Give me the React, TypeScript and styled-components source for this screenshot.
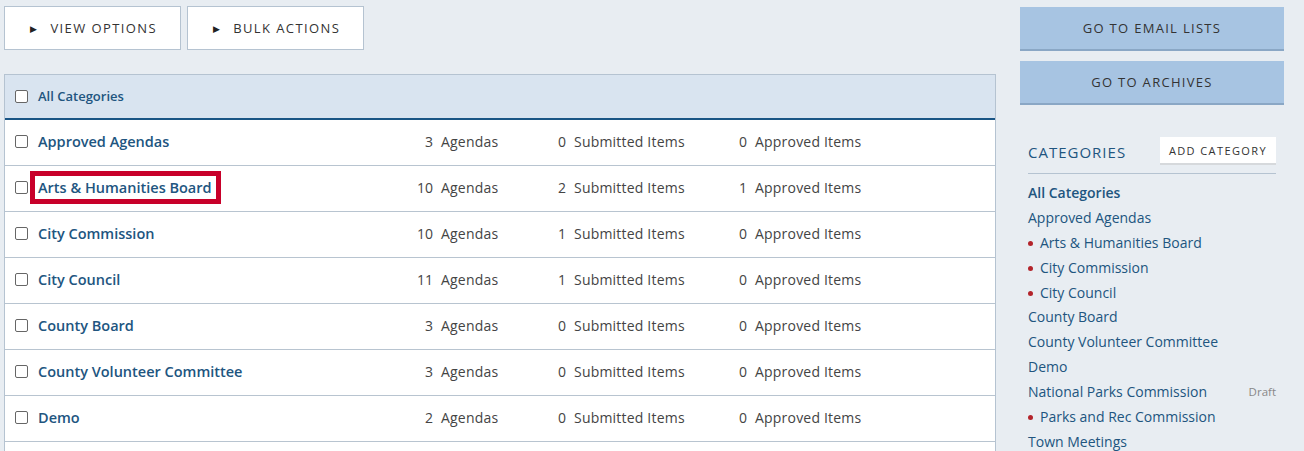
import { FunctionComponent } from "react";
import styled, { createGlobalStyle } from "styled-components";

const GlobalStyle = createGlobalStyle`
  html, body {
    margin: 0;
    padding: 0;
    background: #e8edf2;
    font-family: "Open Sans", "Liberation Sans", sans-serif;
    color: #444;
  }
  * {
    box-sizing: border-box;
  }
`;

const Page = styled.div`
  display: flex;
  gap: 24px;
  padding: 6px 20px 0 4px;
  height: 451px;
  overflow: hidden;
`;
const Main = styled.div`
  width: 992px;
  flex: none;
  display: flex;
  flex-direction: column;
`;
const Toolbar = styled.div`
  display: flex;
  gap: 6px;
  margin-bottom: 24px;
  flex: none;
`;
const ToolButton = styled.button`
  height: 44px;
  width: 177px;
  background: #ffffff;
  border: 1px solid #b5c3d1;
  font-family: inherit;
  font-size: 13px;
  letter-spacing: 1.4px;
  color: #333;
  display: flex;
  align-items: center;
  justify-content: center;
  gap: 12px;
  padding: 0 0 0 2px;
  cursor: pointer;
`;
const Arrow = styled.span`
  font-size: 9px;
  color: #222;
`;
const Table = styled.div`
  background: #ffffff;
  border: 1px solid #b5c3d1;
  border-bottom: none;
  flex: none;
`;
const HeaderRow = styled.div`
  height: 45px;
  background: #d9e4f0;
  border-bottom: 2px solid #1a5585;
  display: flex;
  align-items: center;
  padding-left: 10px;
  padding-bottom: 1px;
  gap: 10px;
`;
const HeaderLabel = styled.span`
  font-size: 13px;
  font-weight: 600;
  color: #21557f;
`;
const Row = styled.div`
  height: 46px;
  border-bottom: 1px solid #b8c4d0;
  display: flex;
  align-items: center;
  padding-left: 10px;
  padding-bottom: 2px;
`;
const Box = styled.span`
  width: 13px;
  height: 13px;
  border: 1px solid #666;
  border-radius: 2px;
  background: #fff;
  flex: none;
`;
const NameCell = styled.div`
  width: 370px;
  margin-left: 10px;
  display: flex;
`;
const Name = styled.span<{ $marked?: boolean }>`
  font-size: 14.5px;
  font-weight: 600;
  color: #21557f;
  padding: 2px 4px 2px 3px;
  margin: -7px 0 -7px -8px;
  border: 5px solid ${(p) => (p.$marked ? "#c8002a" : "transparent")};
`;
const Stat = styled.div<{ $numWidth: number; $width: number }>`
  display: flex;
  width: ${(p) => p.$width}px;
  font-size: 14px;
  color: #444;
  span:first-child {
    width: ${(p) => p.$numWidth}px;
    text-align: right;
    margin-right: 8px;
  }
  span:last-child {
    letter-spacing: 0.2px;
  }
`;

const Side = styled.aside`
  width: 264px;
  flex: none;
  display: flex;
  flex-direction: column;
  padding-top: 1px;
  & > * {
    flex: none;
  }
`;
const SideButton = styled.button`
  height: 44px;
  background: #a7c4e2;
  border: none;
  border-bottom: 2px solid #8aa7c5;
  font-family: inherit;
  font-size: 13px;
  letter-spacing: 1.3px;
  color: #333;
  margin-bottom: 10px;
  cursor: pointer;
`;
const CatHeader = styled.div`
  margin: 22px 8px 0 8px;
  display: flex;
  justify-content: space-between;
  align-items: center;
  border-bottom: 1px solid #b5c3d1;
  padding-bottom: 8px;
`;
const CatTitle = styled.span`
  font-size: 15px;
  letter-spacing: 1px;
  color: #21557f;
  margin-top: 2px;
`;
const AddButton = styled.button`
  background: #ffffff;
  border: none;
  border-bottom: 2px solid #d6d9dc;
  font-family: inherit;
  font-size: 11px;
  letter-spacing: 1.4px;
  color: #333;
  height: 28px;
  padding: 0 9px;
`;
const CatList = styled.ul`
  list-style: none;
  margin: 6px 8px 0 8px;
  padding: 0;
`;
const CatItem = styled.li<{ $bold?: boolean }>`
  height: 24.9px;
  display: flex;
  align-items: center;
  font-size: 14px;
  font-weight: ${(p) => (p.$bold ? 600 : 400)};
  color: #21557f;
`;
const Dot = styled.span`
  width: 5px;
  height: 5px;
  border-radius: 50%;
  background: #b3242b;
  margin-right: 7px;
  margin-top: 2px;
`;
const Draft = styled.span`
  margin-left: auto;
  font-size: 11.5px;
  color: #888;
`;

const rows = [
  { name: "Approved Agendas", a: 3, s: 0, p: 0 },
  { name: "Arts & Humanities Board", a: 10, s: 2, p: 1, marked: true },
  { name: "City Commission", a: 10, s: 1, p: 0 },
  { name: "City Council", a: 11, s: 1, p: 0 },
  { name: "County Board", a: 3, s: 0, p: 0 },
  { name: "County Volunteer Committee", a: 3, s: 0, p: 0 },
  { name: "Demo", a: 2, s: 0, p: 0 },
  { name: "", a: null, s: null, p: null },
];

const categories = [
  { name: "Approved Agendas" },
  { name: "Arts & Humanities Board", dot: true },
  { name: "City Commission", dot: true },
  { name: "City Council", dot: true },
  { name: "County Board" },
  { name: "County Volunteer Committee" },
  { name: "Demo" },
  { name: "National Parks Commission", draft: true },
  { name: "Parks and Rec Commission", dot: true },
  { name: "Town Meetings" },
];

const App: FunctionComponent = () => {
  return (
    <>
      <GlobalStyle />
      <Page>
        <Main>
          <Toolbar>
            <ToolButton>
              <Arrow>▶</Arrow>VIEW OPTIONS
            </ToolButton>
            <ToolButton>
              <Arrow>▶</Arrow>BULK ACTIONS
            </ToolButton>
          </Toolbar>
          <Table>
            <HeaderRow>
              <Box />
              <HeaderLabel>All Categories</HeaderLabel>
            </HeaderRow>
            {rows.map((r, i) => (
              <Row key={i}>
                {r.name && (
                  <>
                    <Box />
                    <NameCell>
                      <Name $marked={r.marked}>{r.name}</Name>
                    </NameCell>
                    <Stat $numWidth={25} $width={132}>
                      <span>{r.a}</span>
                      <span>Agendas</span>
                    </Stat>
                    <Stat $numWidth={26} $width={181}>
                      <span>{r.s}</span>
                      <span>Submitted Items</span>
                    </Stat>
                    <Stat $numWidth={26} $width={160}>
                      <span>{r.p}</span>
                      <span>Approved Items</span>
                    </Stat>
                  </>
                )}
              </Row>
            ))}
          </Table>
        </Main>
        <Side>
          <SideButton>GO TO EMAIL LISTS</SideButton>
          <SideButton>GO TO ARCHIVES</SideButton>
          <CatHeader>
            <CatTitle>CATEGORIES</CatTitle>
            <AddButton>ADD CATEGORY</AddButton>
          </CatHeader>
          <CatList>
            <CatItem $bold>All Categories</CatItem>
            {categories.map((c) => (
              <CatItem key={c.name}>
                {c.dot && <Dot />}
                {c.name}
                {c.draft && <Draft>Draft</Draft>}
              </CatItem>
            ))}
          </CatList>
        </Side>
      </Page>
    </>
  );
};

export default App;
